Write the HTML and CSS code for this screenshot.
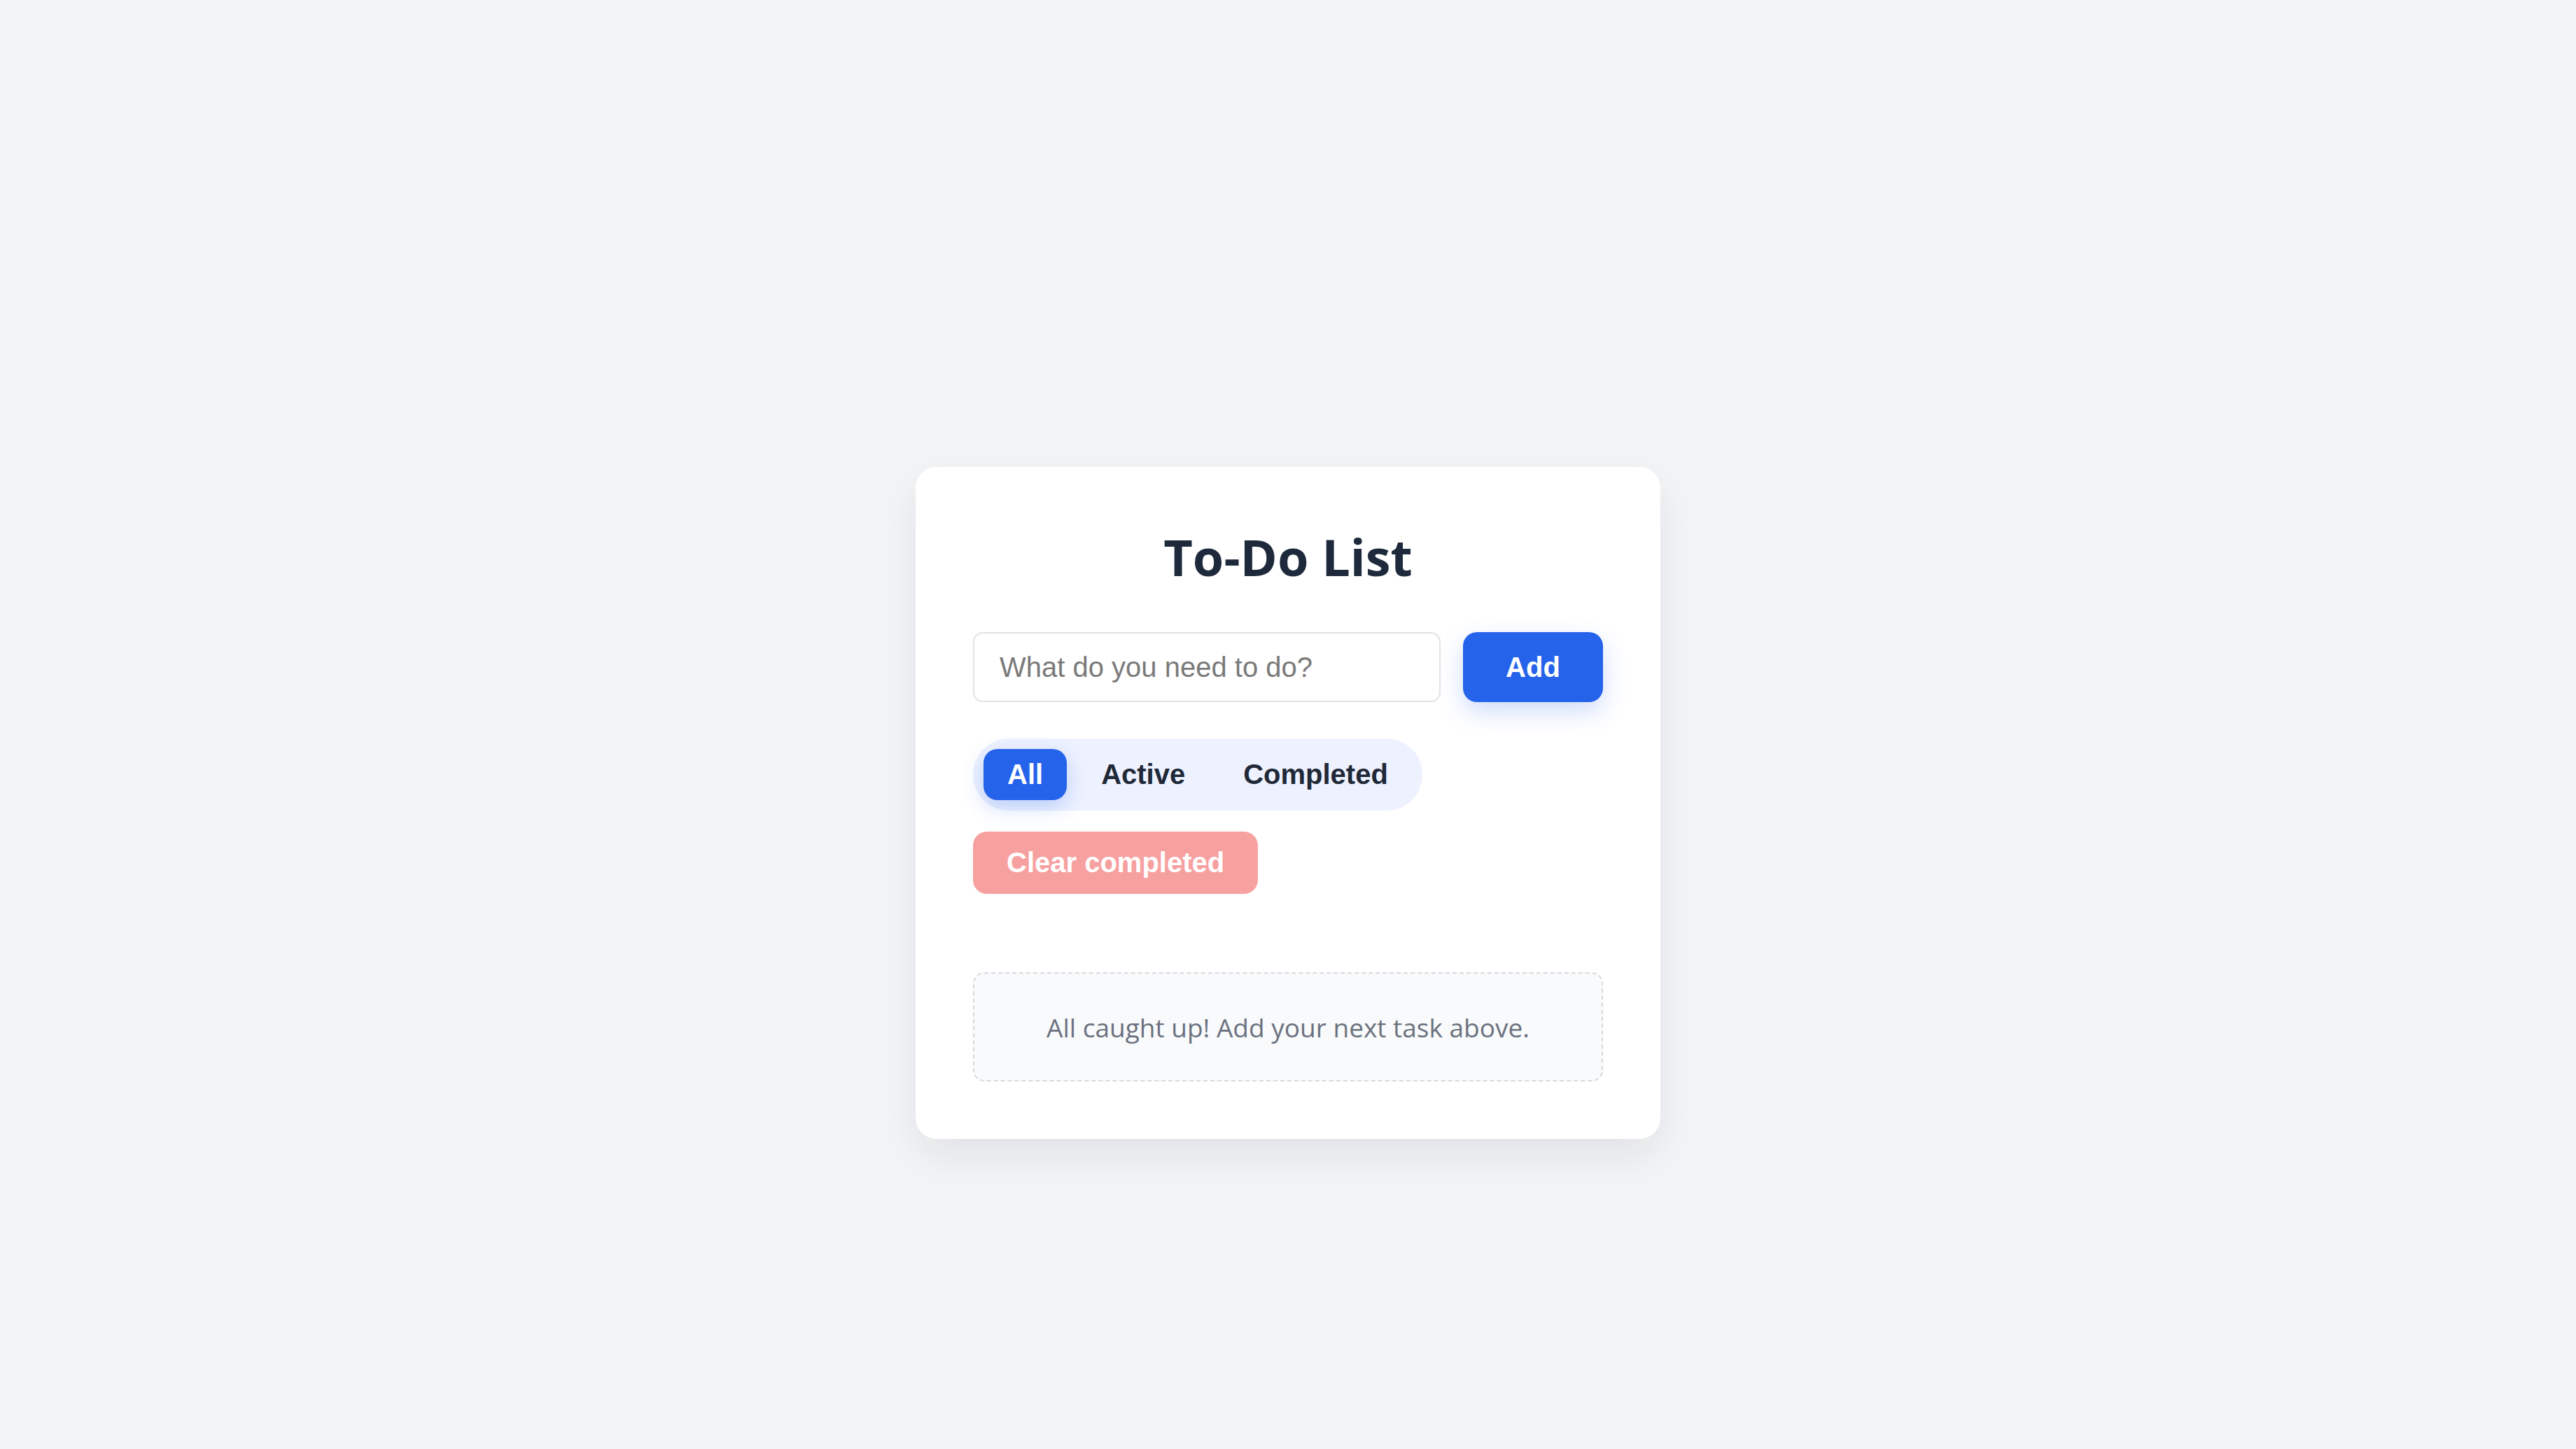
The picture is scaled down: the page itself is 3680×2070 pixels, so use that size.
FILE: index.html
```html
<!DOCTYPE html>
<html lang="en">
  <head>
    <meta charset="UTF-8" />
    <title>To-Do List</title>
    <link rel="stylesheet" href="styles.css">
  </head>
  <body>
    <div class="todo-card">
      <h1 class="todo-title">To-Do List</h1>

      <form class="todo-form" autocomplete="off">
        <input type="text" class="todo-input" placeholder="What do you need to do?" />
        <button type="submit" class="add-button">Add</button>
      </form>

      <div class="filters">
        <button class="filter-button active">All</button>
        <button class="filter-button">Active</button>
        <button class="filter-button">Completed</button>
      </div>

      <button class="clear-button" disabled>Clear completed</button>

      <ul class="todo-list"></ul>
      <div class="empty-state">All caught up! Add your next task above.</div>
    </div>
  </body>
</html>
```

FILE: styles.css
```css
body {
  margin: 0;
  padding-top: 667px;
  min-height: 2070px;
  box-sizing: border-box;
  background-color: #f3f4f6;
  font-family: "Open Sans", "Noto Sans", sans-serif;
}

.todo-card {
  width: 1064px;
  box-sizing: border-box;
  margin: 0 auto;
  padding: 82px;
  background-color: #ffffff;
  border-radius: 30px;
  box-shadow: 0 24px 60px rgba(15, 23, 42, 0.08);
}

.todo-title {
  margin: 10px 0 72px;
  font-size: 72px;
  line-height: 72px;
  font-weight: 700;
  text-align: center;
  color: #1e293b;
}

.todo-form {
  display: flex;
  gap: 32px;
}

.todo-input {
  flex: 1;
  height: 100px;
  box-sizing: border-box;
  padding: 0 36px;
  border: 2px solid #e2e2e2;
  border-radius: 14px;
  font-family: "Liberation Sans", Arial, sans-serif;
  font-size: 40px;
  color: #111827;
  outline: none;
}

.todo-input::placeholder {
  color: #7a7a7a;
}

button {
  font-family: "Liberation Sans", Arial, sans-serif;
  font-size: 40px;
  font-weight: 700;
  border: none;
  cursor: pointer;
}

.add-button {
  width: 200px;
  height: 100px;
  border-radius: 20px;
  background-color: #2563eb;
  color: white;
  box-shadow: 0 14px 34px rgba(37, 99, 235, 0.22);
}

.filters {
  display: inline-flex;
  gap: 15px;
  margin-top: 52px;
  padding: 15px;
  background-color: #eef2ff;
  border-radius: 999px;
}

.filter-button {
  height: 73px;
  padding: 0 34px;
  border-radius: 20px;
  background: transparent;
  color: #1f2937;
}

.filter-button.active {
  background-color: #2563eb;
  color: white;
  box-shadow: 0 10px 28px rgba(37, 99, 235, 0.25);
}

.clear-button {
  display: block;
  margin-top: 30px;
  height: 89px;
  padding: 0 48px;
  border-radius: 20px;
  background-color: #ef4444;
  color: white;
}

.clear-button:disabled {
  opacity: 0.5;
  cursor: default;
}

.todo-list {
  list-style: none;
  margin: 0;
  padding: 0;
}

.empty-state {
  margin-top: 112px;
  height: 156px;
  box-sizing: border-box;
  display: flex;
  align-items: center;
  justify-content: center;
  border: 2px dashed #d5d9df;
  border-radius: 16px;
  background-color: #f9fafb;
  font-size: 37px;
  color: #6b7280;
}
```
